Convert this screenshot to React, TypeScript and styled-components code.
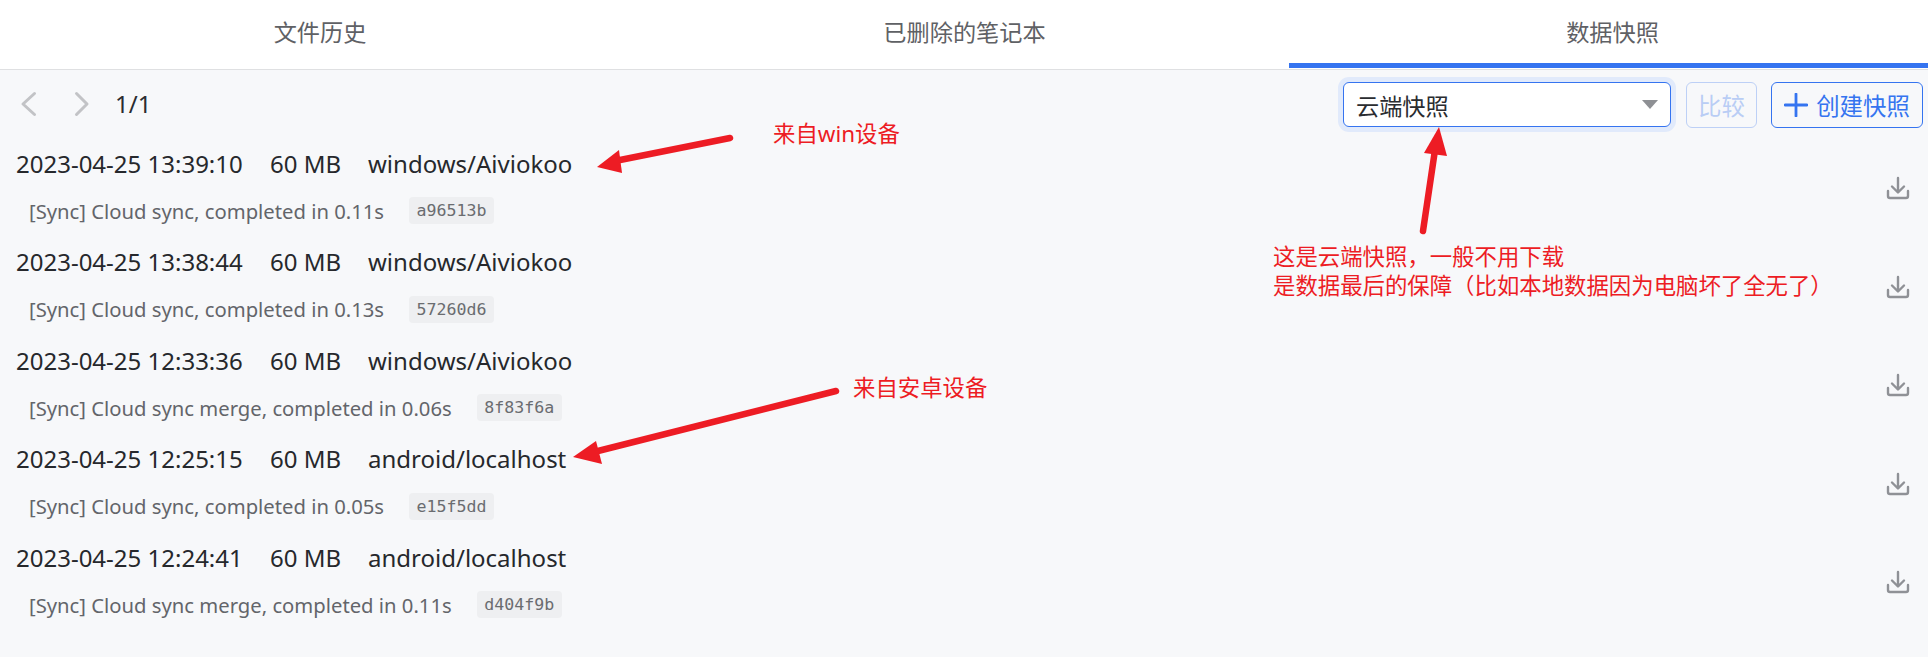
import React from "react";
import styled, { createGlobalStyle } from "styled-components";

const GlobalStyle = createGlobalStyle`
  html, body {
    margin: 0;
    padding: 0;
    height: 100%;
    background: #f7f8fa;
  }
  body {
    font-family: "Noto Sans", "Noto Sans CJK SC", sans-serif;
  }
`;

const Page = styled.div`
  position: relative;
  width: 1928px;
  height: 657px;
  overflow: hidden;
  background: #f7f8fa;
`;

const Tabs = styled.div`
  display: grid;
  grid-template-columns: 640px 649px 639px;
  height: 69px;
  background: #fff;
  border-bottom: 1px solid #dfe0e2;
  box-sizing: content-box;
`;

const Tab = styled.div<{ $active?: boolean }>`
  display: flex;
  align-items: center;
  justify-content: center;
  padding: 0 0 2px ${(p) => (p.$active ? "8px" : "0")};
  box-sizing: border-box;
  font-size: 23.2px;
  color: #5f6165;
  border-bottom: 5px solid ${(p) => (p.$active ? "#3574f0" : "transparent")};
  border-top-left-radius: 3px;
  height: 68px;
`;

const Toolbar = styled.div`
  display: flex;
  align-items: center;
  height: 69px;
  padding: 0 5px 0 18px;
`;

const Pager = styled.div`
  display: flex;
  align-items: center;
  flex: 1;
  padding-bottom: 2px;
`;

const NavIcon = styled.svg`
  width: 20px;
  height: 28px;
  margin-right: 33px;
  fill: none;
  stroke: #c2c3c6;
  stroke-width: 3;
  stroke-linecap: round;
  stroke-linejoin: round;
`;

const PageNum = styled.span`
  margin-left: -9px;
  font-size: 24px;
  color: #2a2c30;
`;

const SelectBox = styled.div`
  display: flex;
  align-items: center;
  justify-content: space-between;
  box-sizing: border-box;
  width: 328px;
  height: 45px;
  margin-right: 15px;
  padding: 0 12px;
  background: #fff;
  border: 1.5px solid #3574f0;
  border-radius: 6px;
  box-shadow: 0 0 0 5px #e1eafb;
  font-size: 23.2px;
  color: #2a2c30;
`;

const Caret = styled.span`
  width: 0;
  height: 0;
  border-left: 8.5px solid transparent;
  border-right: 8.5px solid transparent;
  border-top: 9px solid #8e9094;
`;

const Button = styled.button<{ $disabled?: boolean }>`
  display: flex;
  align-items: center;
  justify-content: center;
  gap: 8px;
  box-sizing: border-box;
  height: 46px;
  padding: 0;
  margin-right: 14px;
  background: transparent;
  border: 1px solid ${(p) => (p.$disabled ? "#bdd0f6" : "#3574f0")};
  border-radius: 6px;
  font-family: inherit;
  font-size: 23.4px;
  color: ${(p) => (p.$disabled ? "#b9cdf5" : "#3574f0")};
`;

const CompareButton = styled(Button)`
  width: 71px;
`;

const CreateButton = styled(Button)`
  width: 152px;
  margin-right: 0;
`;

const List = styled.div`
  display: flex;
  flex-direction: column;
`;

const Row = styled.div`
  display: flex;
  align-items: center;
  justify-content: space-between;
  height: 98.5px;
  padding: 0 18px 0 16px;
  box-sizing: border-box;
`;

const RowBody = styled.div`
  display: flex;
  flex-direction: column;
  gap: 18px;
  padding-bottom: 3px;
`;

const RowMain = styled.div`
  display: grid;
  grid-template-columns: 254px 98px auto;
  font-size: 24px;
  line-height: 30px;
  color: #26282c;
`;

const RowSub = styled.div`
  display: flex;
  align-items: center;
  gap: 25px;
  padding-left: 13px;
  font-size: 20.25px;
  line-height: 28px;
  color: #63656a;
`;

const Hash = styled.span`
  padding: 0 7.5px;
  height: 27px;
  line-height: 27px;
  border-radius: 4px;
  background: #eeeff1;
  font-family: "DejaVu Sans Mono", monospace;
  font-size: 16.6px;
  color: #6a6c70;
`;

const DownloadIcon = styled.svg`
  width: 24px;
  height: 24px;
  fill: none;
  stroke: #8f9196;
  stroke-width: 2.4;
  stroke-linecap: round;
  stroke-linejoin: round;
`;

const Marks = styled.svg`
  position: absolute;
  left: 0;
  top: 0;
  width: 1928px;
  height: 657px;
  pointer-events: none;
`;

const Note = styled.div<{ $x: number; $y: number }>`
  position: absolute;
  left: ${(p) => p.$x}px;
  top: ${(p) => p.$y}px;
  font-size: 22.4px;
  line-height: 29px;
  color: #ed1c24;
  white-space: nowrap;
`;

const rows = [
  { date: "2023-04-25 13:39:10", device: "windows/Aiviokoo", msg: "[Sync] Cloud sync, completed in 0.11s", hash: "a96513b" },
  { date: "2023-04-25 13:38:44", device: "windows/Aiviokoo", msg: "[Sync] Cloud sync, completed in 0.13s", hash: "57260d6" },
  { date: "2023-04-25 12:33:36", device: "windows/Aiviokoo", msg: "[Sync] Cloud sync merge, completed in 0.06s", hash: "8f83f6a" },
  { date: "2023-04-25 12:25:15", device: "android/localhost", msg: "[Sync] Cloud sync, completed in 0.05s", hash: "e15f5dd" },
  { date: "2023-04-25 12:24:41", device: "android/localhost", msg: "[Sync] Cloud sync merge, completed in 0.11s", hash: "d404f9b" },
];

const App = () => {
  return (
    <Page>
      <GlobalStyle />
      <Tabs>
        <Tab>文件历史</Tab>
        <Tab>已删除的笔记本</Tab>
        <Tab $active>数据快照</Tab>
      </Tabs>
      <Toolbar>
        <Pager>
          <NavIcon viewBox="0 0 20 28"><path d="M16.5 3.5 5 14l11.5 10.5" /></NavIcon>
          <NavIcon viewBox="0 0 20 28"><path d="M5.5 3.5 16 14 5.5 24.5" /></NavIcon>
          <PageNum>1/1</PageNum>
        </Pager>
        <SelectBox>
          云端快照
          <Caret />
        </SelectBox>
        <CompareButton $disabled>比较</CompareButton>
        <CreateButton>
          <svg width="24" height="24" viewBox="0 0 24 24" fill="none" stroke="#3574f0" strokeWidth="2.8" strokeLinecap="round">
            <path d="M12 1v22M1 12h22" />
          </svg>
          创建快照
        </CreateButton>
      </Toolbar>
      <List>
        {rows.map((r) => (
          <Row key={r.hash}>
            <RowBody>
              <RowMain>
                <span>{r.date}</span>
                <span>60 MB</span>
                <span>{r.device}</span>
              </RowMain>
              <RowSub>
                <span>{r.msg}</span>
                <Hash>{r.hash}</Hash>
              </RowSub>
            </RowBody>
            <DownloadIcon viewBox="0 0 24 24">
              <path d="M12 2v14M6 10.5l6 6 6-6M2 15v5a2 2 0 0 0 2 2h16a2 2 0 0 0 2-2v-5" />
            </DownloadIcon>
          </Row>
        ))}
      </List>

      <Marks viewBox="0 0 1928 657">
        <g fill="#ed1c24" stroke="#ed1c24" strokeLinecap="round">
          <path d="M730 138 610 162" strokeWidth="6.5" fill="none" />
          <path d="M597 167 619 150 622 173Z" stroke="none" />
          <path d="M836 391 590 453" strokeWidth="6.5" fill="none" />
          <path d="M573 457 596 441 602 464Z" stroke="none" />
          <path d="M1423 231 1435 150" strokeWidth="6.5" fill="none" />
          <path d="M1439 127 1424 153 1447 156Z" stroke="none" />
        </g>
      </Marks>
      <Note $x={773} $y={119}>来自win设备</Note>
      <Note $x={853} $y={373}>来自安卓设备</Note>
      <Note $x={1273} $y={242}>
        这是云端快照，一般不用下载
        <br />
        是数据最后的保障（比如本地数据因为电脑坏了全无了）
      </Note>
    </Page>
  );
};

export default App;
